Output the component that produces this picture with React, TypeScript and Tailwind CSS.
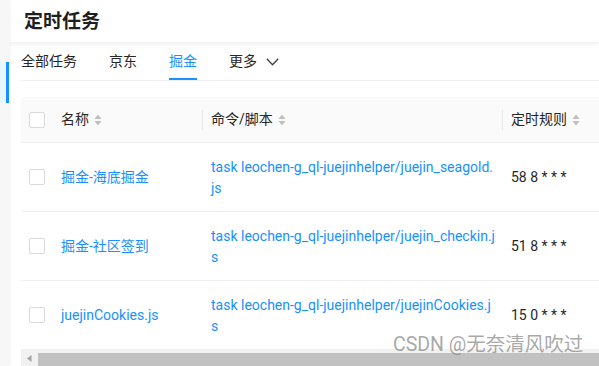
import React from "react";

const FONT = 'Roboto, "Noto Sans CJK SC", sans-serif';

function SortIcon() {
  return (
    <svg width="8" height="12" viewBox="0 0 8 12" className="ml-[5px] shrink-0">
      <path d="M4 0.5 L7.5 5 L0.5 5 Z" fill="#bfbfbf" />
      <path d="M4 11.5 L7.5 7 L0.5 7 Z" fill="#bfbfbf" />
    </svg>
  );
}

function Checkbox() {
  return <div className="w-[16px] h-[16px] border border-[#d9d9d9] rounded-[2px] bg-white" />;
}

const rows = [
  {
    name: "掘金-海底掘金",
    l1: "task leochen-g_ql-juejinhelper/juejin_seagold.",
    l2: "js",
    rule: "58 8 * * *",
  },
  {
    name: "掘金-社区签到",
    l1: "task leochen-g_ql-juejinhelper/juejin_checkin.j",
    l2: "s",
    rule: "51 8 * * *",
  },
  {
    name: "juejinCookies.js",
    l1: "task leochen-g_ql-juejinhelper/juejinCookies.j",
    l2: "s",
    rule: "15 0 * * *",
  },
];

export default function App() {
  return (
    <div
      className="relative flex w-[599px] h-[366px] overflow-hidden bg-white text-[14px] text-[#262626]"
      style={{ fontFamily: FONT }}
    >
      <aside className="relative z-20 w-[9px] shrink-0 bg-[#f7f7f7] shadow-[1px_0_3px_rgba(0,0,0,0.06)] flex flex-col pt-[62px]">
        <div className="flex h-[41px]">
          <div className="w-[6px] bg-[#e6f7ff]" />
          <div className="w-[3px] bg-[#1890ff]" />
        </div>
      </aside>
      <main className="flex-1 min-w-0 flex flex-col">
        <header className="relative z-10 h-[42px] shrink-0 flex items-center pl-[15px] bg-white shadow-[0_2px_5px_rgba(0,0,0,0.07)]">
          <h1 className="text-[19px] font-bold text-[#1f1f1f] leading-none">定时任务</h1>
        </header>
        <div className="flex-1 min-h-0 pl-[12px] flex flex-col">
          <nav className="h-[39px] shrink-0 flex items-stretch gap-[32px] border-b border-[#f0f0f0]">
            <div className="flex items-center pt-[1px]">全部任务</div>
            <div className="flex items-center pt-[1px]">京东</div>
            <div className="flex items-center pt-[3px] border-b-2 border-[#1890ff] text-[#1890ff]">掘金</div>
            <div className="flex items-center pt-[1px] gap-[9px]">
              更多
              <svg width="13" height="8" viewBox="0 0 13 8">
                <path d="M0.8 0.8 L6.5 6.8 L12.2 0.8" fill="none" stroke="#404040" strokeWidth="1.3" />
              </svg>
            </div>
          </nav>
          <div className="mt-[16px] w-[720px] flex flex-col">
            <div className="h-[46px] flex items-center bg-[#fafafa] border-b border-[#f0f0f0]">
              <div className="w-[32px] pl-[8px] flex items-center">
                <Checkbox />
              </div>
              <div className="w-[149px] pl-[8px] flex items-center">
                名称
                <SortIcon />
              </div>
              <div className="w-[300px] h-[20px] pl-[8px] flex items-center border-l border-[#e8e8e8]">
                命令/脚本
                <SortIcon />
              </div>
              <div className="flex-1 h-[20px] pl-[8px] flex items-center border-l border-[#e8e8e8]">
                定时规则
                <SortIcon />
              </div>
            </div>
            {rows.map((r) => (
              <div key={r.name} className="h-[69px] flex items-center border-b border-[#f0f0f0]">
                <div className="w-[32px] pl-[8px] flex items-center">
                  <Checkbox />
                </div>
                <div className="w-[149px] pl-[8px] text-[#1890ff]">{r.name}</div>
                <div className="w-[300px] pl-[9px] pr-[4px] text-[#1890ff] leading-[21px] self-start pt-[14px]">
                  <div className="whitespace-nowrap">{r.l1}</div>
                  <div className="whitespace-nowrap">{r.l2}</div>
                </div>
                <div className="flex-1 pl-[9px] whitespace-nowrap">{r.rule}</div>
              </div>
            ))}
            <div className="w-[578px] h-[16px] flex bg-[#f1f1f1]">
              <div className="w-[17px] flex items-center justify-center">
                <svg width="5" height="7" viewBox="0 0 5 7">
                  <path d="M4.5 0 L0 3.5 L4.5 7 Z" fill="#a3a3a3" />
                </svg>
              </div>
              <div className="flex-1 mt-[3px] bg-[#c1c1c1]" />
            </div>
          </div>
        </div>
      </main>
      <div className="absolute left-[393px] top-[335px] text-[19.5px] text-[rgba(130,130,130,0.7)] whitespace-nowrap leading-none">
        CSDN @无奈清风吹过
      </div>
    </div>
  );
}
